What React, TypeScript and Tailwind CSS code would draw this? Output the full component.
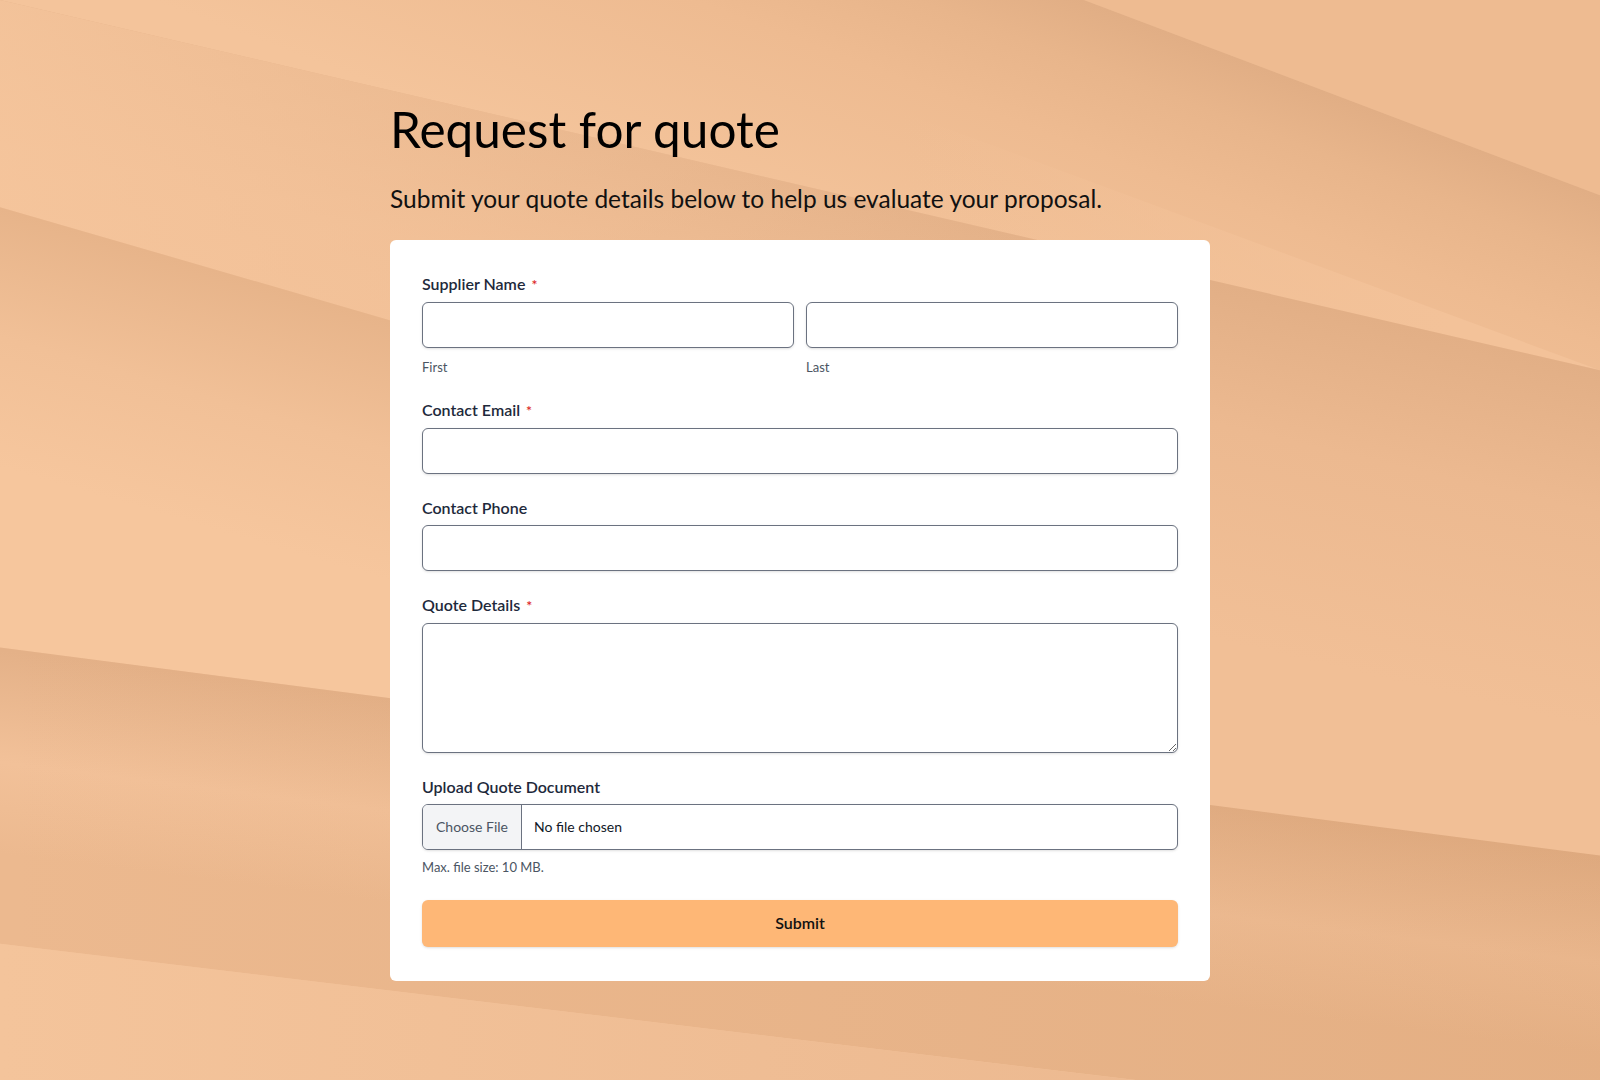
import { useState } from "react";

const inputCls =
  "h-[46px] w-full rounded-md border border-[#6b7280] bg-white px-3 text-[15px] text-[#111827] shadow-sm outline-none focus:border-[#f59e0b]";

function Label({ text, required, htmlFor }: { text: string; required?: boolean; htmlFor?: string }) {
  return (
    <label htmlFor={htmlFor} className="mb-[5px] block text-[16px] font-semibold leading-6 text-[#1e293b]">
      {text}
      {required && <span className="ml-1.5 text-[14px] text-[#dc2626]">*</span>}
    </label>
  );
}

function Background() {
  return (
    <svg className="absolute inset-0 h-full w-full" viewBox="0 0 1600 1080" preserveAspectRatio="none" aria-hidden="true">
      <defs>
        <linearGradient id="r2" gradientUnits="userSpaceOnUse" x1="1340" y1="97" x2="1223" y2="406">
          <stop offset="0" stopColor="#e1ae85" />
          <stop offset="0.18" stopColor="#e8b58b" />
          <stop offset="0.42" stopColor="#eebb91" />
          <stop offset="1" stopColor="#f4c49b" />
        </linearGradient>
        <linearGradient id="rf" gradientUnits="userSpaceOnUse" x1="900" y1="0" x2="1450" y2="0">
          <stop offset="0" stopColor="#f3c299" stopOpacity="0" />
          <stop offset="1" stopColor="#f3c299" stopOpacity="1" />
        </linearGradient>
        <linearGradient id="r3" gradientUnits="userSpaceOnUse" x1="1400" y1="323" x2="1321" y2="664">
          <stop offset="0" stopColor="#e2af86" />
          <stop offset="0.4" stopColor="#ecb990" />
          <stop offset="1" stopColor="#f1bf96" />
        </linearGradient>
        <linearGradient id="r3l" gradientUnits="userSpaceOnUse" x1="0" y1="0" x2="1150" y2="0">
          <stop offset="0" stopColor="#f6c69d" stopOpacity="0.85" />
          <stop offset="1" stopColor="#f6c69d" stopOpacity="0" />
        </linearGradient>
        <linearGradient id="r4" gradientUnits="userSpaceOnUse" x1="200" y1="265" x2="130" y2="505">
          <stop offset="0" stopColor="#e7b48a" />
          <stop offset="0.5" stopColor="#f1c097" />
          <stop offset="1" stopColor="#f6c69d" />
        </linearGradient>
        <linearGradient id="r5" gradientUnits="userSpaceOnUse" x1="600" y1="725" x2="575" y2="925">
          <stop offset="0" stopColor="#e4b188" />
          <stop offset="0.55" stopColor="#f2c199" />
          <stop offset="1" stopColor="#ecb98f" />
        </linearGradient>
        <linearGradient id="r5d" gradientUnits="userSpaceOnUse" x1="0" y1="0" x2="1600" y2="0">
          <stop offset="0" stopColor="#c0824f" stopOpacity="0" />
          <stop offset="1" stopColor="#c0824f" stopOpacity="0.18" />
        </linearGradient>
        <linearGradient id="r6" gradientUnits="userSpaceOnUse" x1="0" y1="0" x2="1200" y2="0">
          <stop offset="0" stopColor="#f4c49b" />
          <stop offset="1" stopColor="#ecb990" />
        </linearGradient>
      </defs>
      <rect width="1600" height="1080" fill="#f2c198" />
      <polygon points="1084,0 1600,0 1600,195" fill="#eebb91" />
      <polygon points="0,0 1084,0 1600,195 1600,370" fill="url(#r2)" />
      <polygon points="0,0 600,0 1600,370" fill="url(#rf)" />
      <polygon points="0,0 1600,370 1600,855 1200,803 1200,555 0,207" fill="url(#r3)" />
      <polygon points="0,0 1600,370 1600,855 1200,803 1200,555 0,207" fill="url(#r3l)" />
      <polygon points="0,207 1200,555 1200,803 0,647" fill="url(#r4)" />
      <polygon points="0,647 1600,855 1600,1080 1142,1080 0,943" fill="url(#r5)" />
      <polygon points="0,647 1600,855 1600,1080 1142,1080 0,943" fill="url(#r5d)" />
      <polygon points="0,943 1142,1080 0,1080" fill="url(#r6)" />
    </svg>
  );
}

export default function App() {
  const [fileName, setFileName] = useState("");

  return (
    <div className="relative min-h-screen overflow-hidden bg-[#f2c198] font-['Lato',sans-serif]">
      <Background />
      <main className="relative mx-auto w-[820px] pb-[100px] pt-[100px]">
        <h1 className="text-[49.5px] font-normal leading-[1.2] text-black">Request for quote</h1>
        <p className="mt-[25px] text-[24.5px] leading-[1.2] text-[#111]">
          Submit your quote details below to help us evaluate your proposal.
        </p>

        <form
          className="mt-[26px] flex flex-col gap-[22px] rounded-md bg-white px-8 pb-[34px] pt-8"
          onSubmit={(e) => e.preventDefault()}
        >
          <div>
            <Label text="Supplier Name" required htmlFor="first" />
            <div className="grid grid-cols-2 gap-3">
              <div>
                <input id="first" className={inputCls} />
                <p className="mt-[10px] text-[13px] leading-[18px] text-[#4b5563]">First</p>
              </div>
              <div>
                <input id="last" className={inputCls} />
                <p className="mt-[10px] text-[13px] leading-[18px] text-[#4b5563]">Last</p>
              </div>
            </div>
          </div>

          <div>
            <Label text="Contact Email" required htmlFor="email" />
            <input id="email" type="email" className={inputCls} />
          </div>

          <div>
            <Label text="Contact Phone" htmlFor="phone" />
            <input id="phone" type="tel" className={inputCls} />
          </div>

          <div>
            <Label text="Quote Details" required htmlFor="details" />
            <textarea
              id="details"
              className="block h-[130px] w-full rounded-md border border-[#6b7280] bg-white px-3 py-2 text-[15px] shadow-sm outline-none"
            />
          </div>

          <div>
            <Label text="Upload Quote Document" htmlFor="doc" />
            <label
              htmlFor="doc"
              className="flex h-[46px] w-full cursor-pointer items-stretch overflow-hidden rounded-md border border-[#6b7280] bg-white shadow-sm"
            >
              <span className="flex w-[99px] items-center justify-center border-r border-[#6b7280] bg-[#f3f4f6] text-[14px] text-[#4b5563]">
                Choose File
              </span>
              <span className="flex items-center pl-3 text-[14px] text-[#111827]">{fileName || "No file chosen"}</span>
            </label>
            <input
              id="doc"
              type="file"
              className="hidden"
              onChange={(e) => setFileName(e.target.files?.[0]?.name ?? "")}
            />
            <p className="mt-2 text-[13px] leading-[18px] text-[#4b5563]">Max. file size: 10 MB.</p>
          </div>

          <button
            type="submit"
            className="mt-[2px] h-[47px] w-full rounded-md bg-[#feb776] text-[16px] font-semibold text-[#111] shadow-sm"
          >
            Submit
          </button>
        </form>
      </main>
    </div>
  );
}
